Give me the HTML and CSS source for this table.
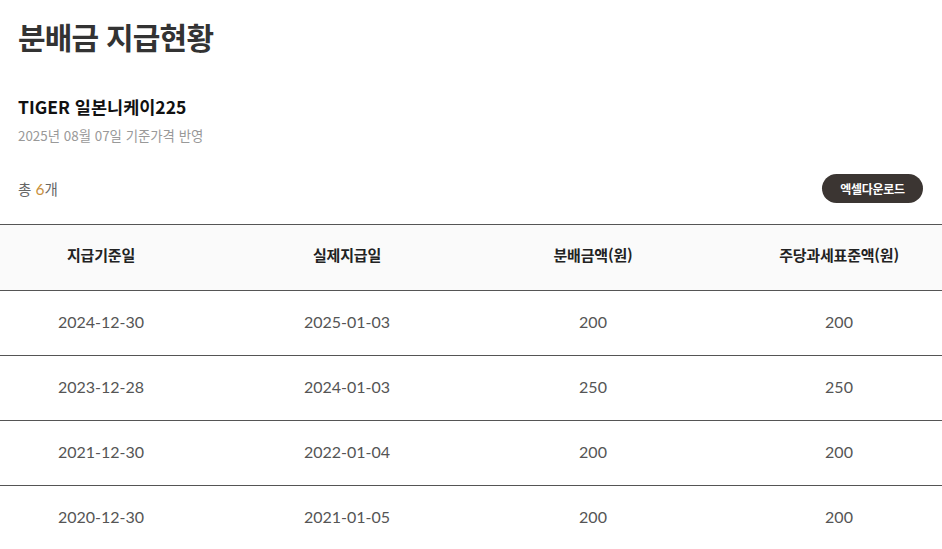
FILE: index.html
```html
<!DOCTYPE html>
<html lang="ko">
<head>
<meta charset="utf-8">
<link rel="stylesheet" href="styles.css">
</head>
<body>
<div class="page">
  <h1 class="title">분배금 지급현황</h1>
  <div class="fund">
    <h2 class="fund-name">TIGER 일본니케이225</h2>
    <p class="fund-date">2025년 08월 07일 기준가격 반영</p>
  </div>
  <div class="toolbar">
    <span class="count">총 <em>6</em>개</span>
    <button class="btn-excel">엑셀다운로드</button>
  </div>
  <div class="table-wrap">
    <div class="table">
      <div class="row head">
        <div class="cell">지급기준일</div>
        <div class="cell">실제지급일</div>
        <div class="cell">분배금액(원)</div>
        <div class="cell">주당과세표준액(원)</div>
      </div>
      <div class="row">
        <div class="cell">2024-12-30</div>
        <div class="cell">2025-01-03</div>
        <div class="cell">200</div>
        <div class="cell">200</div>
      </div>
      <div class="row">
        <div class="cell">2023-12-28</div>
        <div class="cell">2024-01-03</div>
        <div class="cell">250</div>
        <div class="cell">250</div>
      </div>
      <div class="row">
        <div class="cell">2021-12-30</div>
        <div class="cell">2022-01-04</div>
        <div class="cell">200</div>
        <div class="cell">200</div>
      </div>
      <div class="row">
        <div class="cell">2020-12-30</div>
        <div class="cell">2021-01-05</div>
        <div class="cell">200</div>
        <div class="cell">200</div>
      </div>
    </div>
  </div>
</div>
</body>
</html>
```

FILE: styles.css
```css
html, body {
  margin: 0;
  padding: 0;
  background: #fff;
}
body {
  font-family: "Noto Sans CJK KR", "Noto Sans", sans-serif;
  color: #222;
  overflow: hidden;
}
.page {
  width: 942px;
}
.title {
  margin: 0;
  padding: 16px 18px 0;
  font-size: 30px;
  font-weight: 700;
  line-height: 40px;
  letter-spacing: -0.8px;
  color: #333;
}
.fund {
  padding: 39px 18px 0;
}
.fund-name {
  margin: 0;
  font-size: 17.5px;
  font-weight: 700;
  line-height: 24px;
  color: #111;
  letter-spacing: 0;
}
.fund-date {
  margin: 6px 0 0;
  font-size: 13.4px;
  line-height: 20px;
  color: #999;
  letter-spacing: 0;
}
.toolbar {
  display: flex;
  justify-content: space-between;
  align-items: center;
  padding: 28px 19px 0 18px;
  height: 30px;
}
.count {
  font-size: 14.5px;
  color: #666;
}
.count em {
  font-style: normal;
  color: #c8903c;
  font-family: Lato, sans-serif;
  font-size: 15.5px;
}
.btn-excel {
  height: 29px;
  width: 101px;
  border: 0;
  border-radius: 15px;
  background: #3b3532;
  color: #fff;
  font-family: "Noto Sans CJK KR", sans-serif;
  font-size: 12px;
  font-weight: 700;
  letter-spacing: -0.3px;
  cursor: pointer;
}
.table-wrap {
  margin-top: 21px;
  overflow: hidden;
  border-top: 1px solid #555;
}
.table {
  margin-left: -22px;
  width: 984px;
}
.row {
  display: grid;
  grid-template-columns: repeat(4, 246px);
  height: 64px;
  border-bottom: 1px solid #555;
  align-items: center;
}
.row.head {
  height: 65px;
  background: #fafafa;
}
.cell {
  text-align: center;
  font-family: Lato, "Noto Sans CJK KR", sans-serif;
  font-size: 16px;
  color: #555;
  margin-top: -3px;
}
.head .cell {
  font-family: "Noto Sans CJK KR", sans-serif;
  font-size: 15px;
  font-weight: 700;
  color: #222;
  letter-spacing: -0.2px;
  margin-top: -6px;
}
```
